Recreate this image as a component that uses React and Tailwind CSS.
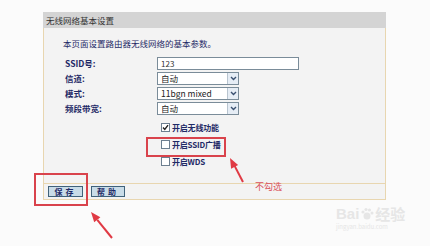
const cn = { fontFamily: '"Noto Sans CJK SC", "Noto Sans", sans-serif' };

function Select({ value, width = "w-[82px]" }) {
  return (
    <div className={`flex h-[13px] ${width} items-stretch border border-[#7a8c99] bg-white`}>
      <span className="flex-1 pl-[3px] text-[8.5px] leading-[11px] text-[#222]">{value}</span>
      <span className="flex w-[11px] items-center justify-center border-l border-[#b8c4cf] bg-[#e6edf5]">
        <svg width="7" height="5" viewBox="0 0 7 5">
          <path d="M1 1 L3.5 3.5 L6 1" fill="none" stroke="#3a5070" strokeWidth="1.4" />
        </svg>
      </span>
    </div>
  );
}

function Check({ checked, label }) {
  return (
    <div className="flex h-[17px] items-center gap-[2px]">
      <span className="flex h-[9px] w-[9px] items-center justify-center border border-[#6d7f90] bg-white">
        {checked && (
          <svg width="7" height="7" viewBox="0 0 7 7">
            <path d="M1 3.5 L2.8 5.5 L6 1.2" fill="none" stroke="#222" strokeWidth="1.4" />
          </svg>
        )}
      </span>
      <span className="text-[8px] font-bold tracking-[-0.2px] text-[#1f2a66]">{label}</span>
    </div>
  );
}

const rows = [
  { label: "SSID号:", input: true },
  { label: "信道:", value: "自动" },
  { label: "模式:", value: "11bgn mixed" },
  { label: "频段带宽:", value: "自动" },
];

export default function App() {
  return (
    <div className="relative h-[246px] w-[430px] overflow-hidden bg-[#fbfbfb] pl-[43px] pt-[12px]" style={cn}>
      <div className="w-[343px]">
        {/* 标题栏 */}
        <div className="flex h-[16px] items-center bg-[#d4d4d4] pl-[3px] text-[8.5px] text-[#333]">
          无线网络基本设置
        </div>

        {/* 设置区 */}
        <div className="h-[155px] border-x border-[#e8d6b0] bg-[#f3f3f3] pt-[9px]">
          <p className="pl-[19px] text-[8.5px] leading-[12px] text-[#1f2a66]">
            本页面设置路由器无线网络的基本参数。
          </p>
          <div className="mt-[8px] flex flex-col gap-[2px] pl-[21px]">
            {rows.map((r) => (
              <div key={r.label} className="flex h-[13px] items-center">
                <span className="w-[92px] text-[8.5px] font-bold text-[#1f2a66]">{r.label}</span>
                {r.input ? (
                  <div className="h-[13px] w-[142px] border border-[#7a8c99] bg-white pl-[3px] text-[8px] leading-[11px] text-[#333]">
                    123
                  </div>
                ) : (
                  <Select value={r.value} />
                )}
              </div>
            ))}
          </div>
          <div className="mt-[4px] flex flex-col pl-[117px]">
            <Check checked label="开启无线功能" />
            <Check label="开启SSID广播" />
            <Check label="开启WDS" />
          </div>
        </div>

        {/* 按钮栏 */}
        <div className="flex h-[17px] items-center gap-[8px] border border-[#e8d6b0] bg-[#f3f3f3] pl-[4px]">
          <button className="h-[11px] w-[35px] border border-[#40627a] bg-[#c9dce8] text-[8px] font-bold leading-[9px] tracking-[3px] text-[#1f2a66]">
            保存
          </button>
          <button className="h-[11px] w-[34px] border border-[#40627a] bg-[#c9dce8] text-[8px] font-bold leading-[9px] tracking-[3px] text-[#1f2a66]">
            帮助
          </button>
        </div>
      </div>

      {/* 标注 */}
      <div className="absolute left-[146px] top-[137px] h-[20px] w-[80px] border-2 border-[#d9434c]" />
      <div className="absolute left-[34px] top-[173px] h-[33px] w-[54px] border-2 border-[#d9434c]" />
      <span className="absolute left-[255px] top-[180px] text-[9px] text-[#d9505a]">不勾选</span>

      <svg className="absolute left-0 top-0" width="430" height="246" viewBox="0 0 430 246">
        <line x1="243" y1="182" x2="234.6" y2="165.9" stroke="#e03a44" strokeWidth="2" />
        <polygon points="230,158 238.1,165.1 231.1,168.7" fill="#e03a44" />
        <line x1="112" y1="238" x2="97.3" y2="219.8" stroke="#e03a44" strokeWidth="2" />
        <polygon points="91,212 100.4,217.3 94.2,222.3" fill="#e03a44" />
      </svg>

      {/* 水印 */}
      <div className="absolute left-[336px] top-[205px] flex flex-col items-start text-[#e6e6e6]">
        <div className="flex items-center text-[15px] font-bold leading-[18px]">
          <span style={{ fontFamily: '"Liberation Sans", sans-serif' }}>Bai</span>
          <svg width="14" height="14" viewBox="0 0 14 14" className="mx-[1px]">
            <circle cx="7" cy="9" r="3.5" fill="#e6e6e6" />
            <circle cx="3" cy="5" r="1.6" fill="#e6e6e6" />
            <circle cx="6" cy="2.5" r="1.6" fill="#e6e6e6" />
            <circle cx="9.5" cy="3" r="1.6" fill="#e6e6e6" />
            <circle cx="12" cy="6" r="1.5" fill="#e6e6e6" />
          </svg>
          <span>经验</span>
        </div>
        <span className="text-[6px] leading-[8px]">jingyan.baidu.com</span>
      </div>
    </div>
  );
}
